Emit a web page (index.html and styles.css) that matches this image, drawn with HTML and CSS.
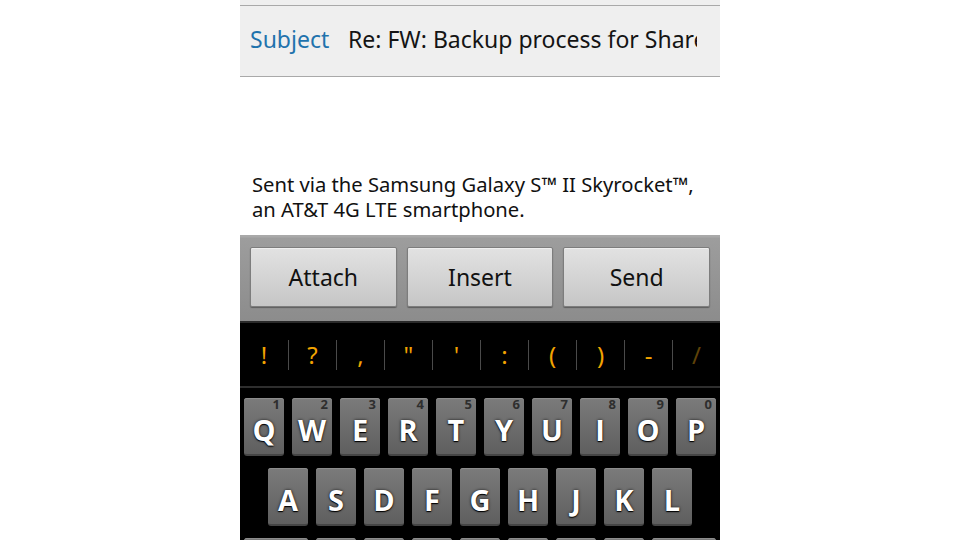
FILE: index.html
```html
<!DOCTYPE html>
<html>
<head>
<meta charset="utf-8">
<link rel="stylesheet" href="styles.css">
</head>
<body>
<div class="phone">
  <div class="topstrip"></div>
  <div class="subject">
    <span class="label">Subject</span>
    <span class="value">Re: FW: Backup process for SharePoint</span>
  </div>
  <div class="body">
    <p>Sent via the Samsung Galaxy S™ II Skyrocket™,<br>an AT&amp;T 4G LTE smartphone.</p>
  </div>
  <div class="actionbar">
    <div class="btn">Attach</div>
    <div class="btn">Insert</div>
    <div class="btn">Send</div>
  </div>
  <div class="candidates">
    <span class="cand">!</span>
    <span class="cand">?</span>
    <span class="cand">,</span>
    <span class="cand">"</span>
    <span class="cand">'</span>
    <span class="cand">:</span>
    <span class="cand">(</span>
    <span class="cand">)</span>
    <span class="cand">-</span>
    <span class="cand fade">/</span>
  </div>
  <div class="keyboard">
    <div class="row">
      <div class="key"><sup>1</sup>Q</div>
      <div class="key"><sup>2</sup>W</div>
      <div class="key"><sup>3</sup>E</div>
      <div class="key"><sup>4</sup>R</div>
      <div class="key"><sup>5</sup>T</div>
      <div class="key"><sup>6</sup>Y</div>
      <div class="key"><sup>7</sup>U</div>
      <div class="key"><sup>8</sup>I</div>
      <div class="key"><sup>9</sup>O</div>
      <div class="key"><sup>0</sup>P</div>
    </div>
    <div class="row row2">
      <div class="key">A</div>
      <div class="key">S</div>
      <div class="key">D</div>
      <div class="key">F</div>
      <div class="key">G</div>
      <div class="key">H</div>
      <div class="key">J</div>
      <div class="key">K</div>
      <div class="key">L</div>
    </div>
    <div class="row">
      <div class="key wide"></div>
      <div class="key"></div>
      <div class="key"></div>
      <div class="key"></div>
      <div class="key"></div>
      <div class="key"></div>
      <div class="key"></div>
      <div class="key"></div>
      <div class="key wide"></div>
    </div>
  </div>
</div>
</body>
</html>
```

FILE: styles.css
```css
html, body {
  margin: 0;
  padding: 0;
  background: #ffffff;
}
body {
  display: flex;
  justify-content: center;
  height: 540px;
  overflow: hidden;
  font-family: "Noto Sans", "Open Sans", "DejaVu Sans", sans-serif;
}
.phone {
  width: 480px;
  height: 540px;
  overflow: hidden;
  background: #ffffff;
}
.topstrip {
  height: 5px;
  background: #efefef;
}
.subject {
  height: 70px;
  box-sizing: content-box;
  background: #efefef;
  border-top: 1px solid #a9a9a9;
  border-bottom: 1px solid #a9a9a9;
  display: flex;
  align-items: center;
  font-size: 23px;
  padding-bottom: 0;
}
.subject .label,
.subject .value {
  position: relative;
  top: -2px;
}
.subject .label {
  color: #1f73ad;
  margin-left: 10px;
  width: 98px;
  flex: none;
}
.subject .value {
  color: #141414;
  white-space: nowrap;
  overflow: hidden;
  width: 349px;
  flex: none;
}
.body {
  height: 158px;
  box-sizing: border-box;
  padding: 95px 0 0 12px;
}
.body p {
  margin: 0;
  font-size: 20.2px;
  line-height: 25px;
  color: #111;
}
.actionbar {
  height: 86px;
  box-sizing: border-box;
  padding: 12px 10px 0 10px;
  background: linear-gradient(#a9a9a9 0, #a9a9a9 2px, #9d9d9d 3px, #8c8c8c 100%);
  display: grid;
  grid-template-columns: 1fr 1fr 1fr;
  gap: 10px;
  align-content: start;
}
.btn {
  height: 60px;
  box-sizing: border-box;
  border: 1px solid #7d7d7d;
  border-radius: 2px;
  background: linear-gradient(#e2e2e2, #c6c6c6);
  box-shadow: 0 1px 1px rgba(0,0,0,0.35), inset 0 1px 0 #eeeeee;
  display: flex;
  align-items: center;
  justify-content: center;
  font-size: 23px;
  color: #111;
}
.candidates {
  height: 63px;
  background: #000;
  border-top: 2px solid #2a2a2a;
  display: flex;
  align-items: center;
}
.cand {
  width: 48px;
  height: 30px;
  box-sizing: border-box;
  border-left: 1px solid #4a4a4a;
  display: flex;
  align-items: center;
  justify-content: center;
  color: #f2a300;
  font-size: 24px;
  line-height: 30px;
}
.cand:first-child {
  border-left: none;
}
.cand.fade {
  color: #5e4208;
}
.keyboard {
  background: #000;
  border-top: 2px solid #2e2e2e;
  padding: 10px 4px 0 4px;
  height: 200px;
}
.row {
  display: flex;
  gap: 8px;
  margin-bottom: 12px;
}
.row2 {
  padding-left: 24px;
}
.key {
  position: relative;
  width: 40px;
  height: 58px;
  flex: none;
  box-sizing: border-box;
  border-radius: 3px;
  background: linear-gradient(#7b7b7b, #5f5f5f);
  border-bottom: 2px solid #454545;
  box-shadow: inset 0 1px 0 #8c8c8c;
  display: flex;
  align-items: center;
  justify-content: center;
  color: #fff;
  font-family: "Open Sans", "Noto Sans", sans-serif;
  font-weight: 700;
  font-size: 29px;
  padding-top: 6px;
  text-shadow: 0 0 3px rgba(0,0,0,0.8), 0 1px 1px #000;
}
.key.wide {
  width: 64px;
}
.key sup {
  position: absolute;
  top: -1px;
  right: 4px;
  font-size: 13px;
  line-height: 14px;
  color: #2e2e2e;
  text-shadow: none;
  font-weight: 700;
  vertical-align: baseline;
}
```
